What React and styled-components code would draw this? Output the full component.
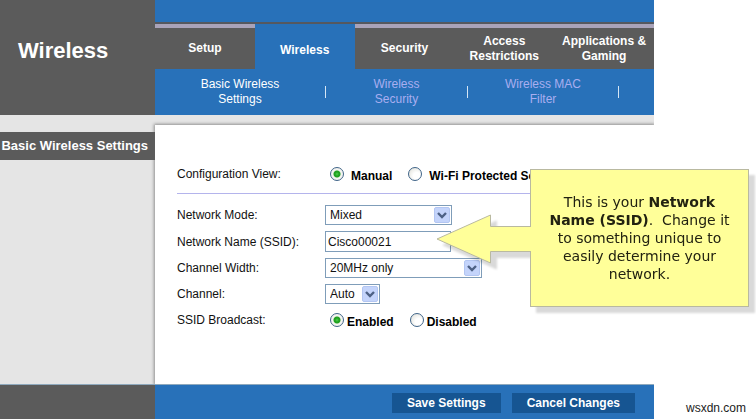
import React, { useState } from "react";
import styled, { createGlobalStyle } from "styled-components";

const GlobalStyle = createGlobalStyle`
  * {
    box-sizing: border-box;
  }
  body {
    margin: 0;
    background: #ffffff;
    color: #111111;
    font-family: "Liberation Sans", Arial, sans-serif;
    font-size: 12px;
  }
`;

const Page = styled.div`
  position: relative;
  display: grid;
  grid-template-columns: minmax(0, 1fr) 102px;
  min-height: 100vh;
`;

const Panel = styled.div`
  display: flex;
  flex-direction: column;
`;

const Header = styled.header`
  display: grid;
  grid-template-columns: 155px minmax(0, 1fr);
  background: #5b5b5b;
`;

const Title = styled.h1`
  margin: 0;
  padding: 38px 0 0 18px;
  color: #ffffff;
  font-size: 22px;
  line-height: 26px;
`;

const Nav = styled.nav`
  padding-top: 22px;
  background: #2871b9;
`;

const Tabs = styled.div`
  display: grid;
  grid-template-columns: repeat(5, minmax(0, 1fr));
  height: 47px;
  border-top: 2px solid #55585f;
`;

const Tab = styled.a`
  display: flex;
  align-items: center;
  justify-content: center;
  padding-top: ${(props) => (props.$active ? "8px" : "0")};
  border-top: ${(props) => (props.$active ? "0" : "4px solid #a9a3b9")};
  background: ${(props) => (props.$active ? "#2871b9" : "#5b5b5b")};
  color: #ffffff;
  font-weight: bold;
  line-height: 15px;
  text-align: center;
  text-decoration: none;
`;

const SubTabs = styled.div`
  display: grid;
  grid-template-columns: 171fr 142fr 151fr 35fr;
  height: 46px;
`;

const SubTab = styled.div`
  display: flex;
  align-items: center;
  justify-content: center;

  &::after {
    content: "";
    width: 1px;
    height: 12px;
    background: #d5e6f5;
  }
`;

const SubLink = styled.a`
  flex: 1;
  color: ${(props) => (props.$active ? "#ffffff" : "#a9aef0")};
  line-height: 15px;
  text-align: center;
  text-decoration: none;
`;

const Body = styled.div`
  flex: 1;
  display: grid;
  grid-template-columns: 155px minmax(0, 1fr);
  padding-top: 10px;
  overflow: hidden;
  background: #e5e5e5;
`;

const Side = styled.div`
  padding-top: 7px;
`;

const SideLabel = styled.h2`
  position: relative;
  z-index: 1;
  display: flex;
  justify-content: flex-end;
  margin: 0;
  padding-right: 7px;
  background: #5b5b5b;
  color: #ffffff;
  font-size: 13px;
  line-height: 28px;
  white-space: nowrap;
`;

const Content = styled.form`
  padding: 38px 22px 0;
  background: #ffffff;
  box-shadow: 0 0 3px 1px #8f8f8f;
`;

const Row = styled.div`
  display: grid;
  grid-template-columns: 148px minmax(0, 1fr);
  align-items: center;
  min-height: 20px;
`;

const Rows = styled.div`
  display: grid;
  gap: 6px;
  padding-top: 11px;
`;

const ViewRow = styled(Row)`
  height: 31px;
  padding-bottom: 9px;
  border-bottom: 1px solid #b4b4ec;
`;

const RadioGroup = styled.div`
  display: flex;
  gap: 16px;
  padding-left: 5px;
`;

const RadioLabel = styled.label`
  display: flex;
  align-items: center;
  gap: ${(props) => props.$gap};
  color: #000000;
  font-weight: bold;
  line-height: 14px;
  white-space: nowrap;

  span {
    padding-top: 4px;
  }
`;

const Radio = styled.input`
  appearance: none;
  flex: none;
  width: 14px;
  height: 14px;
  margin: 0;
  border: 1px solid #3f6488;
  border-radius: 50%;
  background: radial-gradient(circle at 65% 65%, #ffffff 30%, #dcdcd4 100%);

  &:checked {
    background: radial-gradient(circle, #4fd44b 0, #21a121 2px, #21a121 3px, #f4f4f0 4px);
  }
`;

const TextBox = styled.input`
  width: 126px;
  height: 21px;
  padding: 0 2px;
  border: 1px solid #7f9db9;
  border-radius: 0;
  background: #ffffff;
  color: #111111;
  font: inherit;
  outline: 0;
`;

const SelectWrap = styled.div`
  position: relative;
  width: ${(props) => props.$width};
  height: 20px;

  svg {
    position: absolute;
    top: 2px;
    right: 2px;
    pointer-events: none;
  }
`;

const SelectBox = styled.select`
  appearance: none;
  display: block;
  width: 100%;
  height: 20px;
  padding: 0 0 0 4px;
  border: 1px solid #7f9db9;
  border-radius: 0;
  background: #ffffff;
  color: #111111;
  font: inherit;
  outline: 0;
`;

const Footer = styled.footer`
  display: grid;
  grid-template-columns: 155px minmax(0, 1fr);
  height: 35px;
  border-top: 1px solid #8fa9bd;
  background: #5b5b5b;
`;

const Actions = styled.div`
  display: flex;
  align-items: flex-start;
  justify-content: flex-end;
  gap: 11px;
  padding: 8px 19px 0 0;
  background: #2871b9;
`;

const Button = styled.button`
  height: 20px;
  padding: 0 15px;
  border: 0;
  background: #165592;
  color: #ffffff;
  font: bold 12px "Liberation Sans", Arial, sans-serif;
`;

const Credit = styled.aside`
  display: flex;
  align-items: flex-end;
  justify-content: flex-end;
  padding: 0 10px 4px 0;
  color: #222222;
`;

// sits over the form and points at the SSID field
const Callout = styled.div`
  position: absolute;
  top: 169px;
  left: 436px;
  display: flex;
  filter: drop-shadow(6px 6px 1px rgba(0, 0, 0, 0.15));

  svg {
    position: relative;
    z-index: 1;
    flex: none;
    margin: 45px -1px 0 0;
  }
`;

const CalloutText = styled.p`
  display: flex;
  align-items: center;
  justify-content: center;
  width: 219px;
  height: 138px;
  margin: 0;
  padding: 0 6px;
  border: 1px solid #b9b9a0;
  background: #ffff99;
  color: #222211;
  font-family: Verdana, "DejaVu Sans", sans-serif;
  font-size: 14px;
  line-height: 18px;
  text-align: center;
`;

function Select({ id, options, width }) {
  return (
    <SelectWrap $width={width}>
      <SelectBox id={id}>
        {options.map((option) => (
          <option key={option}>{option}</option>
        ))}
      </SelectBox>
      <svg width="16" height="16" viewBox="0 0 16 16">
        <rect x="0.5" y="0.5" width="15" height="15" rx="1.5" fill="#c4d4fb" stroke="#b3c6f2" />
        <path d="M4 6l4 4 4-4" fill="none" stroke="#4d6185" strokeWidth="2.4" />
      </svg>
    </SelectWrap>
  );
}

function RadioOption({ name, label, value, onChange, gap }) {
  return (
    <RadioLabel $gap={gap}>
      <Radio type="radio" name={name} checked={value === label} onChange={() => onChange(label)} />
      <span>{label}</span>
    </RadioLabel>
  );
}

function NavBar() {
  const tabs = ["Setup", "Wireless", "Security", "Access Restrictions", "Applications & Gaming"];
  return (
    <Nav>
      <Tabs>
        {tabs.map((tab) => (
          <Tab key={tab} href="#" $active={tab === "Wireless"}>{tab}</Tab>
        ))}
      </Tabs>
      <SubTabs>
        <SubTab><SubLink href="#" $active>Basic Wireless<br />Settings</SubLink></SubTab>
        <SubTab><SubLink href="#">Wireless<br />Security</SubLink></SubTab>
        <SubTab><SubLink href="#">Wireless MAC<br />Filter</SubLink></SubTab>
      </SubTabs>
    </Nav>
  );
}

function SettingsForm() {
  const [view, setView] = useState("Manual");
  const [ssid, setSsid] = useState("Cisco00021");
  const [broadcast, setBroadcast] = useState("Enabled");

  return (
    <Content id="settings">
      <ViewRow role="radiogroup" aria-labelledby="viewLabel">
        <span id="viewLabel">Configuration View:</span>
        <RadioGroup>
          <RadioOption name="view" label="Manual" value={view} onChange={setView} gap="7px" />
          <RadioOption name="view" label="Wi-Fi Protected Setup" value={view} onChange={setView} gap="7px" />
        </RadioGroup>
      </ViewRow>
      <Rows>
        <Row>
          <label htmlFor="mode">Network Mode:</label>
          <Select id="mode" options={["Mixed", "Disabled"]} width="127px" />
        </Row>
        <Row>
          <label htmlFor="ssid">Network Name (SSID):</label>
          <TextBox id="ssid" type="text" value={ssid} onChange={(e) => setSsid(e.target.value)} />
        </Row>
        <Row>
          <label htmlFor="width">Channel Width:</label>
          <Select id="width" options={["20MHz only", "Auto"]} width="157px" />
        </Row>
        <Row>
          <label htmlFor="channel">Channel:</label>
          <Select id="channel" options={["Auto", "1", "6", "11"]} width="55px" />
        </Row>
        <Row role="radiogroup" aria-labelledby="broadcastLabel">
          <span id="broadcastLabel">SSID Broadcast:</span>
          <RadioGroup>
            <RadioOption name="broadcast" label="Enabled" value={broadcast} onChange={setBroadcast} gap="3px" />
            <RadioOption name="broadcast" label="Disabled" value={broadcast} onChange={setBroadcast} gap="3px" />
          </RadioGroup>
        </Row>
      </Rows>
    </Content>
  );
}

function App() {
  return (
    <>
      <GlobalStyle />
      <Page>
        <Panel>
          <Header>
            <Title>Wireless</Title>
            <NavBar />
          </Header>
          <Body>
            <Side>
              <SideLabel>Basic Wireless Settings</SideLabel>
            </Side>
            <SettingsForm />
          </Body>
          <Footer>
            <span />
            <Actions>
              <Button type="submit" form="settings">Save Settings</Button>
              <Button type="reset" form="settings">Cancel Changes</Button>
            </Actions>
          </Footer>
        </Panel>
        <Credit>wsxdn.com</Credit>
        <Callout>
          <svg width="95" height="50" viewBox="0 0 95 50">
            <path d="M95 12.5H54.5V1L1 25l53.500 24V37.500H95" fill="#ffff99" stroke="#b9b9a0" />
          </svg>
          <CalloutText>
            <span>
              This is your <b>Network</b><br />
              <b>Name (SSID)</b>.&nbsp; Change it<br />
              to something unique to<br />
              easily determine your<br />
              network.
            </span>
          </CalloutText>
        </Callout>
      </Page>
    </>
  );
}

export default App;
